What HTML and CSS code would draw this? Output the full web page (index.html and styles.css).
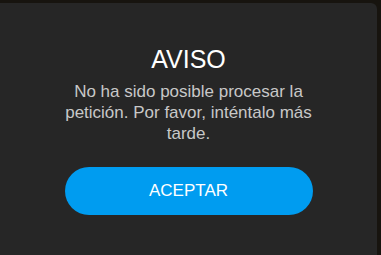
FILE: index.html
```html
<!DOCTYPE HTML>
<html>
<head>
  <title>Aviso</title>
  <meta name="viewport" content="width=device-width, initial-scale=1">
  <link rel="stylesheet" href="styles.css">
</head>
<body>
  <div class="dialog">
    <div class="title">AVISO</div>
    <div class="msg">No ha sido posible procesar la petición. Por favor, inténtalo más tarde.</div>
    <button class="btn">ACEPTAR</button>
  </div>
</body>
</html>
```

FILE: styles.css
```css
html, body {
  margin: 0;
  height: 100%;
  background-color: #17140f;
  font-family: "Liberation Sans", Arial, sans-serif;
}

body {
  padding: 3px 4px 0 0;
  box-sizing: border-box;
}

.dialog {
  height: 100%;
  background-color: #262626;
  border-radius: 0 6px 0 0;
  display: flex;
  flex-direction: column;
  align-items: center;
  padding-top: 41px;
  box-sizing: border-box;
}

.title {
  color: #fff;
  font-size: 25px;
  line-height: 30px;
}

.msg {
  color: #c8c8c8;
  font-size: 17px;
  line-height: 21px;
  text-align: center;
  width: 256px;
  margin-top: 7px;
}

.btn {
  margin-top: 23px;
  width: 248px;
  height: 48px;
  border: none;
  border-radius: 24px;
  background-color: #009cf0;
  color: #fff;
  font-family: inherit;
  font-size: 17px;
  cursor: pointer;
}
```
